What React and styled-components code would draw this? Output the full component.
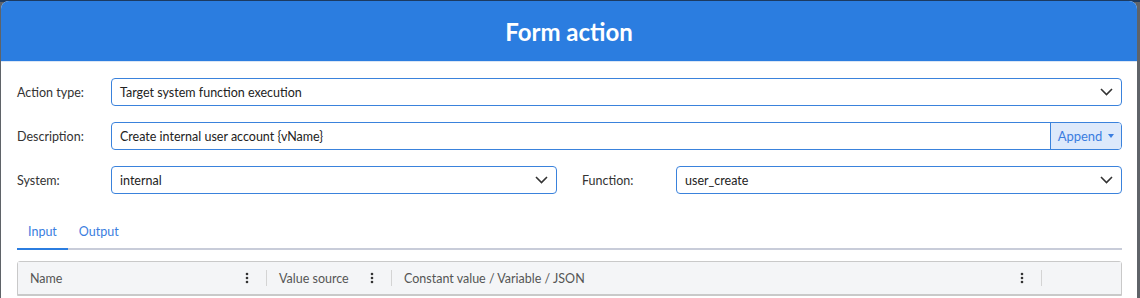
import React from 'react';
import styled, { createGlobalStyle } from 'styled-components';

const GlobalStyle = createGlobalStyle`
  html, body {
    margin: 0;
    padding: 0;
    height: 100%;
    background: linear-gradient(#1c3a60 0 2px, #5f6368 2px);
    overflow: hidden;
  }
  body {
    font-family: 'Segoe UI', Lato, 'Noto Sans', sans-serif;
  }
`;

const Frame = styled.div`
  padding: 1px 3px 0 1px;
`;

const Dialog = styled.div`
  background: #fff;
  border-radius: 8px 8px 0 0;
  overflow: hidden;
  height: 300px;
`;

const Header = styled.div`
  height: 60px;
  background: #2b7de0;
  border-bottom: 1px solid #dbe6f5;
  display: flex;
  align-items: center;
  justify-content: center;
  color: #fff;
  font-size: 24px;
  font-weight: 700;
`;

const Body = styled.div`
  padding: 16px 15px 0 16px;
  display: flex;
  flex-direction: column;
  font-size: 12.5px;
`;

const Row = styled.div`
  display: grid;
  grid-template-columns: ${props => (props.split ? '1fr 1fr' : '1fr')};
  column-gap: 25px;
  margin-bottom: 16px;
`;

const Field = styled.div`
  display: grid;
  grid-template-columns: 94px 1fr;
  align-items: center;
`;

const Label = styled.span`
  color: #333;
`;

const Control = styled.div`
  height: 28px;
  box-sizing: border-box;
  border: 1px solid #3a82dc;
  border-radius: 4px;
  display: flex;
  align-items: center;
  overflow: hidden;
  color: #222;
`;

const Value = styled.span`
  flex: 1;
  padding-left: 8px;
`;

const ChevronWrap = styled.span`
  width: 30px;
  display: flex;
  justify-content: center;
`;

const AppendButton = styled.span`
  height: 100%;
  width: 71px;
  box-sizing: border-box;
  border-left: 1px solid #3a82dc;
  background: #dde9fb;
  color: #3a7de0;
  display: flex;
  align-items: center;
  justify-content: center;
  gap: 6px;
  font-size: 13px;
`;

const Caret = styled.span`
  width: 0;
  height: 0;
  border-left: 3.5px solid transparent;
  border-right: 3.5px solid transparent;
  border-top: 4px solid #3a7de0;
`;

const Tabs = styled.div`
  display: flex;
  border-bottom: 2px solid #c8ccd9;
  margin-top: 8px;
`;

const Tab = styled.div`
  padding: 6px 11px 8px;
  line-height: 16px;
  color: #3a7de0;
  margin-bottom: -2px;
  border-bottom: 2px solid ${props => (props.active ? '#2b7de0' : 'transparent')};
`;

const Table = styled.div`
  margin-top: 11px;
  border: 1px solid #c9c9c9;
  border-radius: 3px 3px 0 0;
`;

const HeadRow = styled.div`
  display: grid;
  grid-template-columns: 249px 125px 650px 1fr;
  height: 32px;
  background: #f4f5f7;
  border-bottom: 1px solid #c9c9c9;
`;

const HeadCell = styled.div`
  display: flex;
  align-items: center;
  padding: 0 18px 0 12px;
  color: #555;
  position: relative;
  &:not(:last-child)::after {
    content: '';
    position: absolute;
    right: 0;
    top: 8px;
    bottom: 8px;
    width: 1px;
    background: #d4d4d4;
  }
`;

const CellText = styled.span`
  flex: 1;
`;

const Dots = () => (
  <svg width="4" height="12" viewBox="0 0 4 12">
    <circle cx="2" cy="2" r="1.3" fill="#333" />
    <circle cx="2" cy="6" r="1.3" fill="#333" />
    <circle cx="2" cy="10" r="1.3" fill="#333" />
  </svg>
);

const Chevron = () => (
  <svg width="13" height="8" viewBox="0 0 13 8">
    <path d="M1 1l5.5 5.5L12 1" fill="none" stroke="#333" strokeWidth="1.6" />
  </svg>
);

const Select = ({ value }) => (
  <Control>
    <Value>{value}</Value>
    <ChevronWrap>
      <Chevron />
    </ChevronWrap>
  </Control>
);

const columns = ['Name', 'Value source', 'Constant value / Variable / JSON'];

const App = () => (
  <>
    <GlobalStyle />
    <Frame>
      <Dialog>
        <Header>Form action</Header>
        <Body>
          <Row>
            <Field>
              <Label>Action type:</Label>
              <Select value="Target system function execution" />
            </Field>
          </Row>
          <Row>
            <Field>
              <Label>Description:</Label>
              <Control>
                <Value>Create internal user account {'{vName}'}</Value>
                <AppendButton>
                  Append <Caret />
                </AppendButton>
              </Control>
            </Field>
          </Row>
          <Row split>
            <Field>
              <Label>System:</Label>
              <Select value="internal" />
            </Field>
            <Field>
              <Label>Function:</Label>
              <Select value="user_create" />
            </Field>
          </Row>
          <Tabs>
            <Tab active>Input</Tab>
            <Tab>Output</Tab>
          </Tabs>
          <Table>
            <HeadRow>
              {columns.map(col => (
                <HeadCell key={col}>
                  <CellText>{col}</CellText>
                  <Dots />
                </HeadCell>
              ))}
              <HeadCell />
            </HeadRow>
          </Table>
        </Body>
      </Dialog>
    </Frame>
  </>
);

export default App;
